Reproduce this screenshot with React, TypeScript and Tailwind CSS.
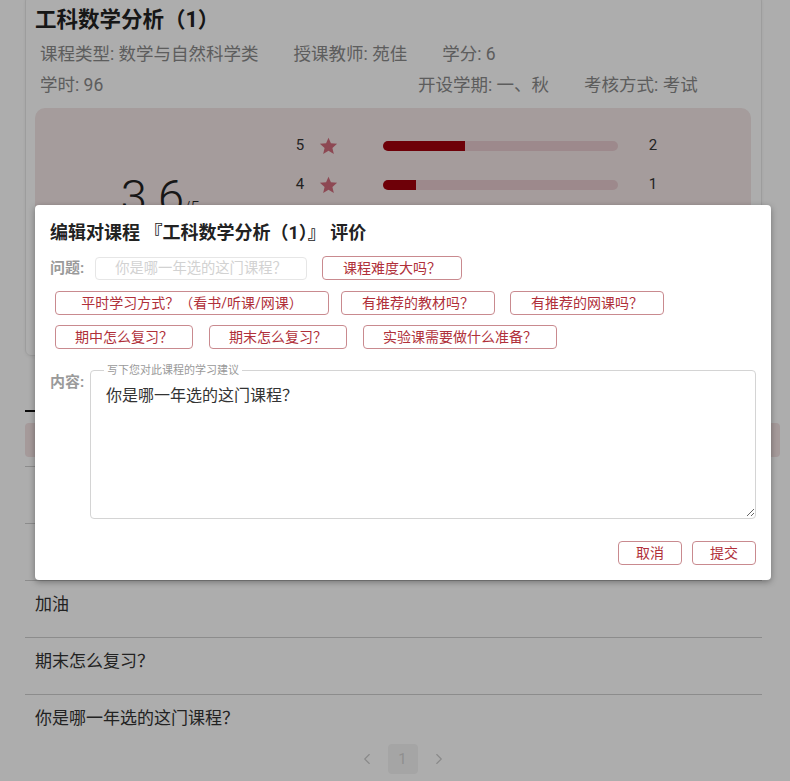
import React from "react";
import { ChevronLeft, ChevronRight } from "lucide-react";

function Chip({
  children,
  className = "",
}: {
  children: React.ReactNode;
  className?: string;
}) {
  return (
    <button
      type="button"
      className={`h-[24px] shrink-0 whitespace-nowrap rounded-[4px] border border-[#c98a8f] bg-white text-[14px] leading-[22px] text-[#b0303a] ${className}`}
    >
      {children}
    </button>
  );
}

function Star() {
  return (
    <svg width="19" height="18" viewBox="0 0 24 23" className="block">
      <polygon
        points="12,0.8 15.1,8.1 23,8.7 17,13.9 18.8,21.6 12,17.5 5.2,21.6 7,13.9 1,8.7 8.9,8.1"
        fill="#d06b7b"
      />
    </svg>
  );
}

const ratings = [
  { n: 5, count: 2, pct: 35 },
  { n: 4, count: 1, pct: 14 },
  { n: 3, count: 1, pct: 14 },
  { n: 2, count: 0, pct: 0 },
  { n: 1, count: 1, pct: 14 },
];

const reviews = ["课程难度大吗？", "有推荐的教材吗？", "加油", "期末怎么复习？", "你是哪一年选的这门课程？"];

export default function App() {
  return (
    <div className="relative h-[781px] w-[790px] overflow-hidden bg-white font-[Roboto,'Noto_Sans_CJK_SC',sans-serif]">
      {/* Course card */}
      <div className="ml-[25px] mt-[-5px] w-[737px] rounded-[6px] border border-[#e8e8e8] px-[9px] pb-[17px] pt-[10px] shadow-[0_1px_3px_rgba(0,0,0,0.06)]">
        <h1 className="text-[21.5px] font-bold leading-[28px] text-[#222]">工科数学分析（1）</h1>
        <div className="mt-[8px] flex gap-[35px] pl-[5px] text-[17.5px] leading-[24px] text-[#8a8a8a]">
          <span>课程类型: 数学与自然科学类</span>
          <span>授课教师: 苑佳</span>
          <span>学分: 6</span>
        </div>
        <div className="mt-[7px] flex pl-[5px] text-[17.5px] leading-[24px] text-[#8a8a8a]">
          <span className="w-[378px]">学时: 96</span>
          <span>开设学期: 一、秋</span>
          <span className="ml-[35px]">考核方式: 考试</span>
        </div>

        <div className="mt-[11px] flex w-[716px] rounded-[10px] bg-[#f3e6e6] pb-[17px] pt-[18px]">
          <div className="w-[250px] pt-[48px] text-center text-[#222]">
            <span className="text-[47px] font-light leading-[46px]">3.6</span>
            <span className="text-[16px] font-light">/5</span>
          </div>
          <div className="ml-[5px] flex flex-col">
            {ratings.map((r) => (
              <div key={r.n} className="flex h-[39px] items-center">
                <span className="w-[20px] text-center text-[15px] text-[#333]">{r.n}</span>
                <span className="ml-[9px]">
                  <Star />
                </span>
                <div className="ml-[45px] h-[10px] w-[235px] overflow-hidden rounded-full bg-[#e7cbce]">
                  <div className="h-full bg-[#a3000d]" style={{ width: `${r.pct}%` }} />
                </div>
                <span className="w-[70px] text-center text-[15px] text-[#333]">{r.count}</span>
              </div>
            ))}
          </div>
        </div>
      </div>

      {/* Lower section */}
      <div className="ml-[25px] w-[755px]">
        <div className="flex h-[56px] items-end">
          <div className="flex h-full w-[80px] flex-col justify-between">
            <span className="pt-[16px] text-center text-[16px] text-[#222]">评价</span>
            <div className="h-[2px] w-full bg-[#111]" />
          </div>
        </div>
        <div className="mt-[11px] h-[34px] w-[755px] rounded-[4px] bg-[#f3e3e4]" />
        <div className="mt-[9px] w-[737px]">
          {reviews.map((t, i) => (
            <div
              key={i}
              className={`border-t border-[#cecece] pl-[10px] pt-[11px] text-[17px] leading-[24px] text-[#333] ${
                i === reviews.length - 1 ? "pb-[14px]" : "h-[57px] pb-[20px]"
              }`}
            >
              {t}
            </div>
          ))}
        </div>
        <div className="flex items-center justify-center gap-[12px]">
          <ChevronLeft size={18} strokeWidth={1.5} className="text-[#cbcbcb]" />
          <span className="flex h-[30px] w-[30px] items-center justify-center rounded-[4px] bg-[#f4f4f4] text-[15px] text-[#d3d3d3]">
            1
          </span>
          <ChevronRight size={18} strokeWidth={1.5} className="text-[#cbcbcb]" />
        </div>
      </div>

      {/* Overlay */}
      <div className="absolute inset-0 bg-black/[0.32]" />

      {/* Dialog */}
      <div className="absolute left-[35px] top-[205px] w-[736px] rounded-[4px] bg-white px-[15px] pb-[15px] pt-[16px] shadow-[0_2px_6px_rgba(0,0,0,0.35)]">
        <h2 className="text-[18px] font-bold leading-[24px] text-[#222]">编辑对课程 『工科数学分析（1）』 评价</h2>

        <div className="mt-[11px] flex items-center">
          <span className="w-[45px] text-[15px] font-bold leading-[22px] text-[#9a9a9a]">问题:</span>
          <input
            readOnly
            placeholder="你是哪一年选的这门课程？"
            className="h-[23px] w-[212px] rounded-[4px] border border-[#e6e6e6] text-center text-[14.3px] outline-none placeholder:text-[#d2d2d2]"
          />
          <Chip className="ml-[15px] px-[20px]">课程难度大吗？</Chip>
        </div>

        <div className="mt-[11px] flex gap-[12px] pl-[5px]">
          <Chip className="w-[274px]">平时学习方式？（看书/听课/网课）</Chip>
          <Chip className="px-[20px]">有推荐的教材吗？</Chip>
          <Chip className="ml-[3px] px-[20px]">有推荐的网课吗？</Chip>
        </div>

        <div className="mt-[10px] flex gap-[16px] pl-[5px]">
          <Chip className="px-[19px]">期中怎么复习？</Chip>
          <Chip className="px-[19px]">期末怎么复习？</Chip>
          <Chip className="px-[19px]">实验课需要做什么准备？</Chip>
        </div>

        <div className="mt-[15px] flex items-start">
          <span className="mt-[7px] w-[40px] text-[15px] font-bold leading-[22px] text-[#9a9a9a]">内容:</span>
          <fieldset className="h-[155px] w-[666px] rounded-[4px] border border-[#d4d4d4]">
            <legend className="ml-[13px] px-[3px] text-[11px] leading-[13px] text-[#9a9a9a]">写下您对此课程的学习建议</legend>
            <textarea
              defaultValue="你是哪一年选的这门课程？"
              className="block h-[140px] w-full px-[15px] pt-[7px] text-[16px] leading-[24px] text-[#333] outline-none"
            />
          </fieldset>
        </div>

        <div className="mt-[22px] flex justify-end gap-[10px]">
          <Chip className="w-[64px]">取消</Chip>
          <Chip className="w-[64px]">提交</Chip>
        </div>
      </div>
    </div>
  );
}
